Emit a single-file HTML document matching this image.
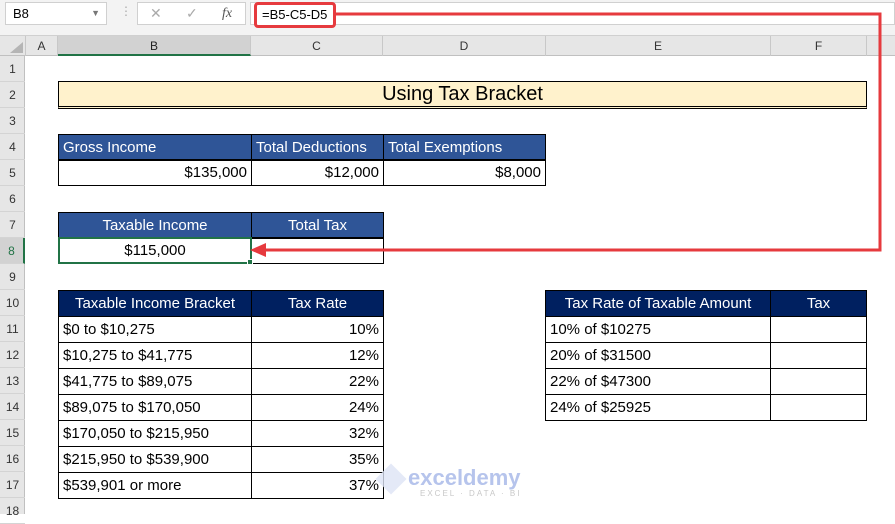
<!DOCTYPE html><html><head><style>
*{margin:0;padding:0;box-sizing:border-box}
body{width:895px;height:514px;overflow:hidden;background:#fff;font-family:"Liberation Sans",sans-serif;position:relative}
.a{position:absolute}
.c{position:absolute;font-size:15px;line-height:25px;height:27px;white-space:nowrap;padding:0 4px;color:#000}
.h1{background:#2f5597;color:#fff}
.h2{background:#002060;color:#fff}
.b{border:1px solid #000}
.ctr{text-align:center}.r{text-align:right}
.rh{position:absolute;left:0;width:25px;text-align:center;font-size:12px;color:#333;height:26px;line-height:26px;border-bottom:1px solid #d4d4d4}
.ch{position:absolute;top:36px;height:20px;line-height:20px;text-align:center;font-size:12px;color:#333;border-right:1px solid #c8c8c8}
</style></head><body>
<div class="a" style="left:0;top:0;width:895px;height:36px;background:#f3f3f3;border-bottom:1px solid #d0d0d0"></div>
<div class="a" style="left:5px;top:2px;width:102px;height:23px;background:#fff;border:1px solid #d0d0d0;font-size:13px;line-height:21px;padding-left:7px">B8<span style="position:absolute;right:6px;top:0;font-size:9px;color:#777">▼</span></div>
<div class="a" style="left:120px;top:4px;color:#aaa;font-size:12px">⋮</div>
<div class="a" style="left:137px;top:2px;width:109px;height:23px;background:#fff;border:1px solid #d0d0d0;font-size:14px;color:#aaa;line-height:21px"><span style="position:absolute;left:12px">✕</span><span style="position:absolute;left:48px">✓</span><span style="position:absolute;left:84px;color:#555;font-style:italic;font-family:'Liberation Serif'">fx</span></div>
<div class="a" style="left:250px;top:2px;width:645px;height:23px;background:#fff;border:1px solid #d0d0d0"></div>
<div class="a" style="left:254px;top:2px;width:82px;height:26px;border:3px solid #e63a3e;border-radius:4px;background:#fff;font-size:13px;line-height:20px;padding-left:5px">=B5-C5-D5</div>
<div class="a" style="left:0;top:36px;width:895px;height:20px;background:#e6e6e6;border-bottom:1px solid #c0c0c0"></div>
<div class="a" style="left:10px;top:42px;width:0;height:0;border-left:13px solid transparent;border-bottom:11px solid #b5b5b5"></div>
<div class="ch" style="left:25px;width:33px;border-left:1px solid #c8c8c8">A</div>
<div class="ch" style="left:58px;width:193px;background:#d2d2d2;border-bottom:2px solid #217346;color:#222">B</div>
<div class="ch" style="left:251px;width:132px">C</div>
<div class="ch" style="left:383px;width:163px">D</div>
<div class="ch" style="left:546px;width:225px">E</div>
<div class="ch" style="left:771px;width:96px">F</div>
<div class="a" style="left:0;top:56px;width:25px;height:458px;background:#e6e6e6;border-right:1px solid #c0c0c0"></div>
<div class="rh" style="top:56px">1</div><div class="rh" style="top:82px">2</div><div class="rh" style="top:108px">3</div><div class="rh" style="top:134px">4</div><div class="rh" style="top:160px">5</div><div class="rh" style="top:186px">6</div><div class="rh" style="top:212px">7</div><div class="rh" style="top:238px;background:#d2d2d2;color:#217346;border-right:2px solid #217346">8</div><div class="rh" style="top:264px">9</div><div class="rh" style="top:290px">10</div><div class="rh" style="top:316px">11</div><div class="rh" style="top:342px">12</div><div class="rh" style="top:368px">13</div><div class="rh" style="top:394px">14</div><div class="rh" style="top:420px">15</div><div class="rh" style="top:446px">16</div><div class="rh" style="top:472px">17</div><div class="rh" style="top:498px">18</div>
<div class="a" style="left:58px;top:81px;width:809px;height:28px;background:#fff2cc;border:1px solid #000;border-bottom:3px double #000;text-align:center;font-size:20px;line-height:25px">Using Tax Bracket</div>
<div class="c h1 b" style="left:58px;top:134px;width:194px">Gross Income</div>
<div class="c h1 b" style="left:251px;top:134px;width:133px">Total Deductions</div>
<div class="c h1 b" style="left:383px;top:134px;width:163px">Total Exemptions</div>
<div class="c b r" style="left:58px;top:159px;width:194px">$135,000</div>
<div class="c b r" style="left:251px;top:159px;width:133px">$12,000</div>
<div class="c b r" style="left:383px;top:159px;width:163px">$8,000</div>
<div class="c h1 b ctr" style="left:58px;top:212px;width:194px">Taxable Income</div>
<div class="c h1 b ctr" style="left:251px;top:212px;width:133px">Total Tax</div>
<div class="c b" style="left:251px;top:237px;width:133px"></div>
<div class="c ctr" style="left:58px;top:237px;width:194px;border:2px solid #217346;line-height:23px">$115,000</div>
<div class="a" style="left:247px;top:259px;width:6px;height:6px;background:#217346;border:1px solid #fff"></div>
<div class="c h2 b ctr" style="left:58px;top:290px;width:194px">Taxable Income Bracket</div>
<div class="c h2 b ctr" style="left:251px;top:290px;width:133px">Tax Rate</div>
<div class="c b" style="left:58px;top:316px;width:194px">$0 to $10,275</div><div class="c b r" style="left:251px;top:316px;width:133px">10%</div>
<div class="c b" style="left:58px;top:342px;width:194px">$10,275 to $41,775</div><div class="c b r" style="left:251px;top:342px;width:133px">12%</div>
<div class="c b" style="left:58px;top:368px;width:194px">$41,775 to $89,075</div><div class="c b r" style="left:251px;top:368px;width:133px">22%</div>
<div class="c b" style="left:58px;top:394px;width:194px">$89,075 to $170,050</div><div class="c b r" style="left:251px;top:394px;width:133px">24%</div>
<div class="c b" style="left:58px;top:420px;width:194px">$170,050 to $215,950</div><div class="c b r" style="left:251px;top:420px;width:133px">32%</div>
<div class="c b" style="left:58px;top:446px;width:194px">$215,950 to $539,900</div><div class="c b r" style="left:251px;top:446px;width:133px">35%</div>
<div class="c b" style="left:58px;top:472px;width:194px">$539,901 or more</div><div class="c b r" style="left:251px;top:472px;width:133px">37%</div>
<div class="c h2 b ctr" style="left:545px;top:290px;width:226px">Tax Rate of Taxable Amount</div>
<div class="c h2 b ctr" style="left:770px;top:290px;width:97px">Tax</div>
<div class="c b" style="left:545px;top:316px;width:226px">10% of $10275</div><div class="c b" style="left:770px;top:316px;width:97px"></div>
<div class="c b" style="left:545px;top:342px;width:226px">20% of $31500</div><div class="c b" style="left:770px;top:342px;width:97px"></div>
<div class="c b" style="left:545px;top:368px;width:226px">22% of $47300</div><div class="c b" style="left:770px;top:368px;width:97px"></div>
<div class="c b" style="left:545px;top:394px;width:226px">24% of $25925</div><div class="c b" style="left:770px;top:394px;width:97px"></div>
<div class="a" style="left:380px;top:468px;width:22px;height:22px;background:#dde3f5;transform:rotate(45deg);opacity:.8"></div>
<div class="a" style="left:408px;top:467px;font-size:22px;line-height:22px;color:#b6c4ec;font-weight:bold">exceldemy</div>
<div class="a" style="left:420px;top:489px;font-size:8px;letter-spacing:2px;color:#c8c8c8">EXCEL · DATA · BI</div>
<svg class="a" style="left:0;top:0" width="895" height="514">
<polyline points="336,14 880,14 880,250 262,250" fill="none" stroke="#e63a3e" stroke-width="3"/>
<polygon points="250,250 266,243 266,257" fill="#e63a3e"/>
</svg>
</body></html>
